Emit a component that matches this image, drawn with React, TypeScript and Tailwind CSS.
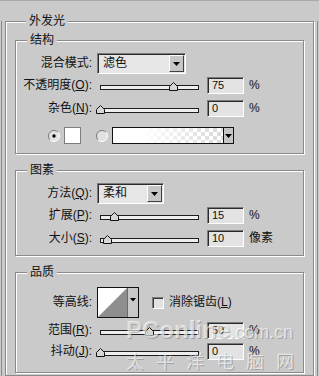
import React from "react";

type Kids = { children?: React.ReactNode };

function Group({ title, className = "", children }: { title: string; className?: string; children?: React.ReactNode }) {
  return (
    <div className={`border border-[#898989] shadow-[inset_1px_1px_0_#ffffff,1px_1px_0_#ffffff] ${className}`}>
      <div className="-mt-[9px] ml-[11px] h-[16px] w-fit bg-[#cacaca] px-[3px] text-[12px] leading-[16px]">{title}</div>
      {children}
    </div>
  );
}

function Label({ children, tall = false }: Kids & { tall?: boolean }) {
  return (
    <div className={`w-[76px] shrink-0 text-right text-[12px] ${tall ? "leading-[21px]" : "leading-[17px]"}`}>
      {children}
    </div>
  );
}

function Arrow() {
  return (
    <svg width="7" height="4" viewBox="0 0 7 4">
      <path d="M0 0H7L3.5 4Z" fill="#000" />
    </svg>
  );
}

function Select({ value, w }: { value: string; w: string }) {
  return (
    <div className={`ml-[5px] flex h-[21px] ${w} border border-t-[#7c7c7c] border-l-[#7c7c7c] border-b-white border-r-white bg-[#e6e6e6] shadow-[inset_1px_1px_0_#2a2a2a]`}>
      <span className="flex-1 pl-[5px] text-[12px] leading-[19px]">{value}</span>
      <div className="my-[1px] mr-[1px] flex w-[15px] items-center justify-center border border-t-white border-l-white border-b-[#404040] border-r-[#404040] bg-[#c6c6c6]">
        <Arrow />
      </div>
    </div>
  );
}

function Slider({ pct }: { pct: number }) {
  return (
    <div className="relative ml-[8px] mt-[8px] h-[5px] w-[99px] shrink-0 border border-[#1c1c1c] bg-[#eeeeee]">
      <svg className="absolute top-[-4px]" style={{ left: Math.round(pct * 0.98 - 5.5) }} width="9" height="9" viewBox="0 0 9 9">
        <path d="M0.5 8.5V4.5L4.5 0.5L8.5 4.5V8.5Z" fill="#d6d6d6" stroke="#111" />
      </svg>
    </div>
  );
}

function NumBox({ value }: { value: string }) {
  return (
    <div className="ml-[8px] h-[17px] w-[37px] shrink-0 border border-t-[#7c7c7c] border-l-[#7c7c7c] border-b-white border-r-white bg-[#e3e3e3] pl-[4px] text-[11px] leading-[15px] shadow-[inset_1px_1px_0_#2a2a2a]">
      {value}
    </div>
  );
}

function SliderRow({ label, pct, value, unit, className }: { label: React.ReactNode; pct: number; value: string; unit: string; className: string }) {
  return (
    <div className={`flex h-[17px] items-start ${className}`}>
      <Label>{label}</Label>
      <Slider pct={pct} />
      <NumBox value={value} />
      <span className="ml-[5px] text-[12px] leading-[17px]">{unit}</span>
    </div>
  );
}

function Radio({ on }: { on?: boolean }) {
  return (
    <svg width="12" height="12" viewBox="0 0 12 12">
      <circle cx="6" cy="6" r="5.5" fill="#e2e2e2" />
      <path d="M2.1 9.9A5.5 5.5 0 0 1 9.9 2.1" stroke="#7a7a7a" fill="none" />
      <path d="M9.9 2.1A5.5 5.5 0 0 1 2.1 9.9" stroke="#ffffff" fill="none" />
      {on ? <circle cx="6" cy="6" r="1.7" fill="#000" /> : null}
    </svg>
  );
}

export default function App() {
  return (
    <div className="relative h-[376px] w-[319px] overflow-hidden border-t border-[#aaaaaa] bg-[#cacaca] font-['Liberation_Sans','Noto_Sans_CJK_SC',sans-serif] text-[#111]">
      <div className="ml-[1px] h-full w-[317px] border-l border-r border-[#8a8a8a]">
        <Group title="外发光" className="ml-[3px] mt-[20px] w-[309px] px-[9px] pb-[2px]">
          <Group title="结构" className="mt-[11px] pb-[9px]">
            <div className="mt-[5px] flex h-[21px]">
              <Label tall>混合模式:</Label>
              <Select value="滤色" w="w-[89px]" />
            </div>
            <SliderRow className="mt-[3px]" label={<>不透明度(<span className="underline">O</span>):</>} pct={75} value="75" unit="%" />
            <SliderRow className="mt-[6px]" label={<>杂色(<span className="underline">N</span>):</>} pct={0} value="0" unit="%" />
            <div className="mt-[10px] flex h-[17px] items-center pl-[32px]">
              <Radio on />
              <div className="ml-[4px] h-[17px] w-[17px] border border-[#7d7d7d] bg-white" />
              <div className="ml-[15px]">
                <Radio />
              </div>
              <div className="ml-[4px] flex h-[17px] w-[122px] border border-[#111]">
                <div className="flex-1 bg-[image:conic-gradient(#d9d9d9_25%,#ffffff_0_50%,#d9d9d9_0_75%,#ffffff_0)] bg-[length:8px_8px]">
                  <div className="h-full w-full bg-linear-to-r from-white from-25% to-transparent" />
                </div>
                <div className="flex w-[10px] items-center justify-center border-l border-[#111] bg-[#c6c6c6]">
                  <Arrow />
                </div>
              </div>
            </div>
          </Group>

          <Group title="图素" className="mt-[16px] pb-[8px]">
            <div className="mt-[5px] flex h-[21px]">
              <Label tall>方法(<span className="underline">Q</span>):</Label>
              <Select value="柔和" w="w-[67px]" />
            </div>
            <SliderRow className="mt-[3px]" label={<>扩展(<span className="underline">P</span>):</>} pct={15} value="15" unit="%" />
            <SliderRow className="mt-[6px]" label={<>大小(<span className="underline">S</span>):</>} pct={8} value="10" unit="像素" />
          </Group>

          <Group title="品质" className="mt-[16px] pb-[12px]">
            <div className="mt-[7px] flex h-[31px] items-center">
              <Label>等高线:</Label>
              <svg className="ml-[5px]" width="42" height="31" viewBox="0 0 42 31">
                <rect x="0.5" y="0.5" width="41" height="30" fill="#ffffff" stroke="#111" />
                <path d="M1 30L30 1V30Z" fill="#8e8e8e" />
                <rect x="30" y="1" width="11" height="29" fill="#c8c8c8" />
                <path d="M30.5 1V30" stroke="#6a6a6a" />
                <path d="M33 11H39L36 14.5Z" fill="#000" />
              </svg>
              <div className="ml-[13px] h-[12px] w-[12px] border border-t-[#7c7c7c] border-l-[#7c7c7c] border-b-white border-r-white bg-[#e2e2e2] shadow-[inset_1px_1px_0_#3a3a3a]" />
              <span className="ml-[5px] text-[12px] leading-[17px]">
                消除锯齿(<span className="underline">L</span>)
              </span>
            </div>
            <SliderRow className="mt-[4px]" label={<>范围(<span className="underline">R</span>):</>} pct={50} value="50" unit="%" />
            <SliderRow className="mt-[4px]" label={<>抖动(<span className="underline">J</span>):</>} pct={0} value="0" unit="%" />
          </Group>
        </Group>
      </div>

      <div className="pointer-events-none absolute left-[126px] top-[317px] text-white/60 [text-shadow:1px_1px_0_rgba(80,80,80,0.35)]">
        <div className="flex items-baseline leading-[24px]">
          <span className="text-[24px] font-bold">PConline</span>
          <span className="text-[18px]">.com.cn</span>
        </div>
        <div className="mt-[9px] text-[18px] leading-[18px] tracking-[12px]">太平洋电脑网</div>
      </div>
    </div>
  );
}
